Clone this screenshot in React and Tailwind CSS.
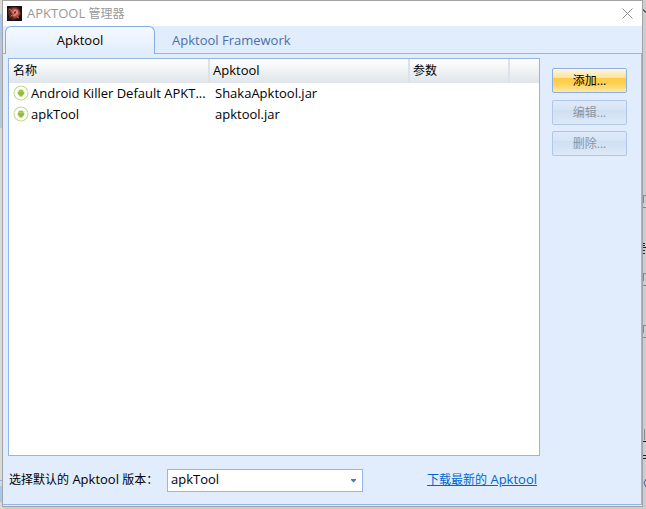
import React from 'react';
import { clsx } from 'clsx';

const tools = [
  { id: 1, name: 'Android Killer Default APKT...', file: 'ShakaApktool.jar', args: '' },
  { id: 2, name: 'apkTool', file: 'apktool.jar', args: '' },
];

function Cjk({ children }) {
  return <span className="text-xs leading-4">{children}</span>;
}

function AppIcon() {
  return (
    <svg className="h-[15px] w-[15px] shrink-0" viewBox="0 0 15 15" aria-hidden="true">
      <rect width="15" height="15" fill="#1c1110" />
      <path d="M1 3 5 1l5 0 3 3 1 4-3 4-4 2-4-2-2-4z" fill="#5e2721" />
      <path d="M3 5 6 2l5 1 2 4-2 4-4 1-2-2 0-2z" fill="#b04c41" />
      <path d="m8 3 3 2 0 3-3 2-2 0 1-2-2-2z" fill="#dd8577" />
      <path d="m7 6 2-1 0 2-2 1z" fill="#7a2a22" />
      <path d="m2 3 3 2M3 11l2-2M10 11l2 1" stroke="#a0837b" strokeWidth="1" />
      <path d="M0 13l3-3 3 4z" fill="#33201d" />
    </svg>
  );
}

function AndroidIcon() {
  return (
    <svg className="h-4 w-4 shrink-0" viewBox="0 0 16 16" aria-hidden="true">
      <circle cx="8" cy="8" r="7" fill="#fff" stroke="#c3dc90" strokeWidth="1.1" />
      <path d="M5.4 6.8a2.6 2.4 0 0 1 5.2 0z" fill="#97c03d" />
      <path d="M4.7 6.8h6.6v2.5h-.8v.9H9.6v1.2H6.4v-1.2h-.9v-.9h-.8z" fill="#92be38" />
    </svg>
  );
}

// Slivers of the windows that show behind the dialog
function Backdrop() {
  return (
    <div className="absolute inset-0 overflow-hidden bg-[#cdcdcd]" aria-hidden="true">
      <div className="absolute left-0 top-0 h-full w-[3px] bg-[#dadada]" />
      <div className="absolute left-0 top-[14px] h-6 w-[2px] bg-[#a8c6ee]" />
      <div className="absolute left-0 top-[38px] h-[90px] w-[2px] bg-[#b9c7d8]" />
      <div className="absolute left-0 top-[480px] h-px w-[2px] bg-[#8fb0df]" />
      <div className="absolute left-0 top-[486px] h-4 w-[2px] bg-[#a8c6ee]" />
      <svg className="absolute right-0 top-0 h-[509px] w-[3px]" viewBox="0 0 3 509">
        <path d="M0 10h1v1h1v1h1" stroke="#333" fill="none" />
        <path d="M0 195.5h3M0 207.5h3M0 273.5h3M0 285.5h3M0 325.5h3M0 337.5h3M.5 195v8M.5 273v8M.5 325v8" stroke="#8a8a8a" />
        <path d="M0 243.5h2M0 245.5h2M0 247.5h3M0 250.5h2M0 253.5h2" stroke="#222" />
        <path d="M0 441.5h3M0 455.5h3M0 458.5h3" stroke="#222" />
        <path d="M1.5 429v11" stroke="#8a8a8a" />
        <path d="m3 479-2 4 2 4" stroke="#5353a8" fill="none" />
      </svg>
    </div>
  );
}

function TitleBar() {
  return (
    <header className="flex h-[25px] items-center gap-[5px] bg-white pl-1 pr-2">
      <AppIcon />
      <h1 className="flex-1 pb-px text-[13px] leading-4 text-[#999]">
        APKTOOL <Cjk>管理器</Cjk>
      </h1>
      <button type="button" aria-label="关闭" className="p-px">
        <svg className="h-[11px] w-[11px]" viewBox="0 0 11 11" fill="none" stroke="#8c8c8c">
          <path d="m.5.5 10 10M10.5.5l-10 10" />
        </svg>
      </button>
    </header>
  );
}

function Tabs() {
  return (
    <div role="tablist" className="flex h-7 items-stretch border-b border-[#93b6e8] pl-[2px]">
      <button
        type="button"
        role="tab"
        aria-selected="true"
        className="-mb-px w-[150px] rounded-t-md border border-b-0 border-[#84aee2] bg-linear-to-b from-[#f5f9ff] to-[#e1edfc] pb-[2px] text-black"
      >
        Apktool
      </button>
      <button type="button" role="tab" aria-selected="false" className="px-[17px] text-[#4a70a5]">
        Apktool Framework
      </button>
    </div>
  );
}

function ToolTable() {
  return (
    <div className="flex-1 border border-[#93b6e8] bg-white">
      <table className="w-full table-fixed border-separate border-spacing-0 text-left">
        <colgroup>
          <col className="w-[201px]" />
          <col className="w-[200px]" />
          <col className="w-[100px]" />
          <col />
        </colgroup>
        <thead>
          <tr className="h-6 bg-linear-to-b from-white to-[#e0e5ea]">
            <th className="border-r-2 border-[#dbe2e9] px-1 pb-px font-normal"><Cjk>名称</Cjk></th>
            <th className="border-r-2 border-[#dbe2e9] px-[3px] pb-[2px] font-normal">Apktool</th>
            <th className="border-r-2 border-[#dbe2e9] px-[3px] pb-px font-normal"><Cjk>参数</Cjk></th>
            <td />
          </tr>
        </thead>
        <tbody>
          {tools.map((tool) => (
            <tr key={tool.id} className="h-[21px]">
              <td className="pb-px pl-1">
                <div className="flex items-center gap-[2px]">
                  <AndroidIcon />
                  <span className="whitespace-nowrap">{tool.name}</span>
                </div>
              </td>
              <td className="px-[5px] pb-px">{tool.file}</td>
              <td className="px-[5px] pb-px">{tool.args}</td>
              <td />
            </tr>
          ))}
        </tbody>
      </table>
    </div>
  );
}

function ActionButton({ children, disabled }) {
  return (
    <button
      type="button"
      disabled={disabled}
      className={clsx(
        'h-[25px] w-full rounded-xs border text-xs',
        disabled
          ? 'border-[#b0c7e8] bg-[linear-gradient(#dfeaf9,#d6e4f5_38%,#cfdff2_40%,#dce9f9)] text-[#8e959f]'
          : 'border-[#8fb0df] bg-[linear-gradient(#fff6e0,#fbe3a4_38%,#ffcb3f_40%,#ffd257_65%,#ffe9a8)] text-black'
      )}
    >
      {children}
    </button>
  );
}

function Footer() {
  return (
    <footer className="flex h-12 items-center pl-px">
      <label htmlFor="version" className="w-[158px] whitespace-nowrap pb-[2px]">
        <Cjk>选择默认的</Cjk> Apktool <Cjk>版本：</Cjk>
      </label>
      <div className="relative w-[196px]">
        <select
          id="version"
          defaultValue="apkTool"
          className="block h-[23px] w-full appearance-none border border-[#93b6e8] bg-white px-[3px] pb-[2px] text-black outline-none"
        >
          {tools.map((tool) => (
            <option key={tool.id}>{tool.name}</option>
          ))}
        </select>
        <svg className="pointer-events-none absolute right-[6px] top-[10px] h-1 w-[7px]" viewBox="0 0 7 4" aria-hidden="true">
          <path d="M1 0h5v1L3.5 3.5 1 1z" fill="#4a7ab5" />
        </svg>
      </div>
      <a href="#download" className="ml-auto mr-[3px] pb-[2px] text-[#0066cc] underline">
        <Cjk>下载最新的</Cjk> Apktool
      </a>
    </footer>
  );
}

function App() {
  return (
    <div className="relative flex min-h-screen pb-[2px] pl-[2px] pr-[3px] font-['Open_Sans','Noto_Sans_CJK_SC',sans-serif] text-[13px] leading-4 text-black">
      <Backdrop />
      <main className="relative flex flex-1 flex-col border border-[#a3a3a3] bg-[#e1edfc]">
        <TitleBar />
        <Tabs />
        <section role="tabpanel" className="mb-px flex flex-1 border-b border-r border-[#93b6e8] pl-[5px] pt-1">
          <div className="flex flex-1 flex-col">
            <ToolTable />
            <Footer />
          </div>
          <div className="flex w-[101px] flex-col gap-[6px] pl-3 pr-[14px] pt-[10px]">
            <div className="mb-px">
              <ActionButton>添加...</ActionButton>
            </div>
            <ActionButton disabled>编辑...</ActionButton>
            <ActionButton disabled>删除...</ActionButton>
          </div>
        </section>
      </main>
    </div>
  );
}

export default App;
